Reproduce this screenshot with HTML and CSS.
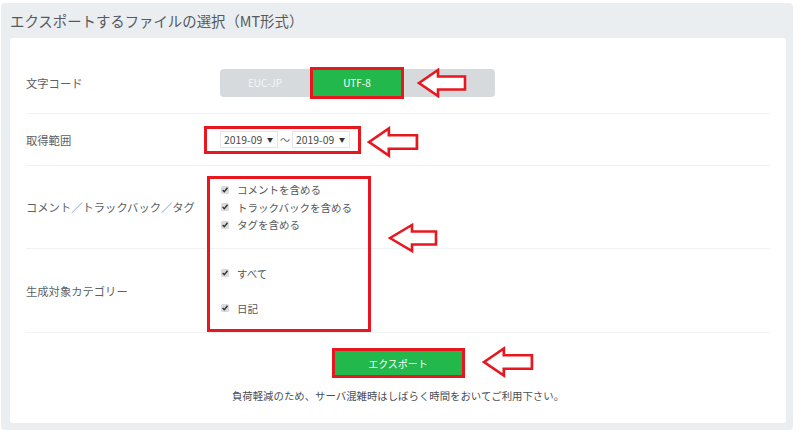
FILE: index.html
```html
<!DOCTYPE html>
<html lang="ja">
<head>
<meta charset="utf-8">
<title>エクスポート</title>
<link rel="stylesheet" href="styles.css">
</head>
<body>
<div class="panel">
  <h2 class="panel-title">エクスポートするファイルの選択（MT形式）</h2>
  <div class="card">
    <div class="row row-charset">
      <div class="label">文字コード</div>
      <div class="field">
        <div class="toggle">
          <span class="seg">EUC-JP</span>
          <span class="seg seg-on">UTF-8</span>
          <span class="seg seg-rest"></span>
          <svg class="arrow arrow-charset" viewBox="0 0 50 30"><polygon points="2,15 21,2 21,8.5 48,8.5 48,21.5 21,21.5 21,28" /></svg>
        </div>
      </div>
    </div>
    <div class="row row-range">
      <div class="label">取得範囲</div>
      <div class="field">
        <div class="datebox">
          <span class="select">2019-09<span class="caret">▼</span></span>
          <span class="tilde">〜</span>
          <span class="select">2019-09<span class="caret">▼</span></span>
          <svg class="arrow arrow-range" viewBox="0 0 50 30"><polygon points="2,15 21,2 21,8.5 48,8.5 48,21.5 21,21.5 21,28" /></svg>
        </div>
      </div>
    </div>
    <div class="checks-area">
      <div class="check-highlight">
        <svg class="arrow arrow-checks" viewBox="0 0 50 30"><polygon points="2,15 24,2 24,8.5 48,8.5 48,21.5 24,21.5 24,28" /></svg>
      </div>
      <div class="row row-opts">
        <div class="label">コメント／トラックバック／タグ</div>
        <div class="field">
          <ul class="checks">
            <li><span class="cb"><svg viewBox="0 0 8 8"><path d="M1.6 4.1 L3.3 5.8 L6.5 1.8" /></svg></span>コメントを含める</li>
            <li><span class="cb"><svg viewBox="0 0 8 8"><path d="M1.6 4.1 L3.3 5.8 L6.5 1.8" /></svg></span>トラックバックを含める</li>
            <li><span class="cb"><svg viewBox="0 0 8 8"><path d="M1.6 4.1 L3.3 5.8 L6.5 1.8" /></svg></span>タグを含める</li>
          </ul>
        </div>
      </div>
      <div class="row row-cats">
        <div class="label">生成対象カテゴリー</div>
        <div class="field">
          <ul class="checks checks-wide">
            <li><span class="cb"><svg viewBox="0 0 8 8"><path d="M1.6 4.1 L3.3 5.8 L6.5 1.8" /></svg></span>すべて</li>
            <li><span class="cb"><svg viewBox="0 0 8 8"><path d="M1.6 4.1 L3.3 5.8 L6.5 1.8" /></svg></span>日記</li>
          </ul>
        </div>
      </div>
    </div>
    <div class="actions">
      <div class="btn-wrap">
        <button class="btn-export" type="button">エクスポート</button>
        <svg class="arrow arrow-btn" viewBox="0 0 50 30"><polygon points="2,15 21,2 21,8.5 48,8.5 48,21.5 21,21.5 21,28" /></svg>
      </div>
      <p class="note">負荷軽減のため、サーバ混雑時はしばらく時間をおいてご利用下さい。</p>
    </div>
  </div>
</div>
</body>
</html>
```
FILE: styles.css
```css
* { box-sizing: border-box; }

html, body {
  margin: 0;
  padding: 0;
  background: #ffffff;
}

body {
  font-family: "Noto Sans CJK JP", "Noto Sans", sans-serif;
  color: #555a5e;
}

.panel {
  margin: 3px 0 0 1px;
  width: 792px;
  height: 427px;
  background: #ebeef0;
  border-radius: 4px;
  padding: 0 7px 7px 9px;
}

.panel-title {
  margin: 0;
  height: 35px;
  line-height: 35px;
  font-size: 14.4px;
  font-weight: normal;
  color: #555a5e;
  white-space: nowrap;
}

.card {
  background: #ffffff;
  border-radius: 3px;
  height: 385px;
  padding: 14px 16px 0 16px;
}

.row {
  display: grid;
  grid-template-columns: 178px 1fr;
  align-items: center;
  border-bottom: 1px solid #f0f2f3;
}

.row-charset { height: 62px; }
.row-range { height: 52px; }
.row-opts { height: 83px; }
.row-cats { height: 84px; }

.label {
  font-size: 11.3px;
  color: #5c6165;
  white-space: nowrap;
}

.field {
  display: flex;
  align-items: center;
}

/* toggle */
.toggle {
  position: relative;
  margin-left: 16px;
  width: 275px;
  height: 28px;
  background: #d6dadd;
  border-radius: 4px;
  display: flex;
  align-items: center;
}

.seg {
  display: flex;
  align-items: center;
  justify-content: center;
  height: 28px;
  font-size: 10px;
  color: #f4f6f7;
}

.seg:first-child { width: 90px; }

.seg-on {
  width: 94px;
  height: 32px;
  background: #22b84b;
  border: 3px solid #e8171f;
  color: #ffffff;
}

.seg-rest { flex: 1; }

/* arrows */
.arrow {
  position: absolute;
  width: 50px;
  height: 30px;
}

.arrow polygon {
  fill: #ffffff;
  stroke: #e8171f;
  stroke-width: 2.6;
  stroke-linejoin: miter;
}

.arrow-charset {
  left: 197px;
  top: -1px;
}

/* date range */
.datebox {
  position: relative;
  display: flex;
  align-items: center;
  width: 157px;
  height: 28px;
  border: 3px solid #e8171f;
  padding-left: 13px;
}

.select {
  display: flex;
  align-items: center;
  justify-content: space-between;
  width: 58px;
  height: 17px;
  border: 1px solid #e6e7e8;
  padding: 0 4px 0 3px;
  font-size: 10.4px;
  color: #4a4a4a;
}

.caret {
  font-size: 6px;
  color: #333333;
}

.tilde {
  width: 14px;
  text-align: center;
  font-size: 10px;
  color: #666666;
}

.arrow-range {
  left: 160px;
  top: -3px;
  width: 52px;
  height: 32px;
}

/* checkbox rows */
.checks-area {
  position: relative;
}

.check-highlight {
  position: absolute;
  left: 181px;
  top: 10px;
  width: 164px;
  height: 156px;
  border: 3px solid #e8171f;
  z-index: 1;
}

.arrow-checks {
  left: 178px;
  top: 43px;
  width: 50px;
  height: 32px;
}

.checks {
  list-style: none;
  margin: 0 0 0 17px;
  padding: 0;
  font-size: 10.5px;
  color: #54585c;
}

.checks li {
  display: flex;
  align-items: center;
  height: 17.5px;
}

.checks-wide li {
  height: 35px;
}

.cb {
  display: inline-flex;
  width: 8px;
  height: 8px;
  margin-right: 8px;
  background: #d9dadb;
  border-radius: 1.5px;
}

.cb svg {
  width: 8px;
  height: 8px;
}

.cb path {
  fill: none;
  stroke: #333333;
  stroke-width: 1.4;
}

/* actions */
.actions {
  display: flex;
  flex-direction: column;
  align-items: center;
  padding-top: 15px;
}

.btn-wrap {
  position: relative;
}

.btn-export {
  display: block;
  width: 133px;
  height: 30px;
  background: #22b84b;
  border: 3px solid #e8171f;
  color: #ffffff;
  font-family: "Noto Sans CJK JP", "Noto Sans", sans-serif;
  font-size: 10px;
  padding: 0;
}

.arrow-btn {
  left: 150px;
  top: -4px;
  width: 52px;
  height: 36px;
}

.note {
  margin: 11px 0 0 0;
  font-size: 10.4px;
  line-height: 14px;
  color: #4a4e52;
}
```
